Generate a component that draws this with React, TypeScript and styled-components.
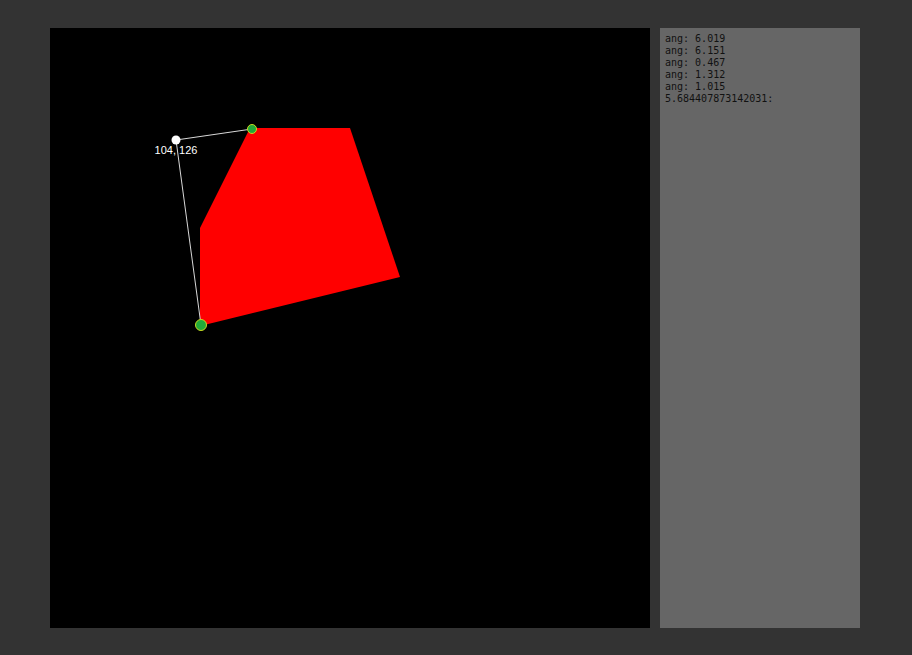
import React from 'react';
import styled, { createGlobalStyle } from 'styled-components';

const GlobalStyle = createGlobalStyle`
  html, body {
    margin: 0;
    padding: 0;
    background: #333333;
  }
`;

const Page = styled.div`
  display: flex;
  gap: 10px;
  padding: 28px 0 0 50px;
  height: 655px;
  box-sizing: border-box;
`;

const Stage = styled.svg`
  display: block;
  width: 600px;
  height: 600px;
  background: #000;
  flex: none;
`;

const SidePanel = styled.div`
  width: 200px;
  height: 600px;
  box-sizing: border-box;
  padding: 5px 5px;
  background: #666666;
  color: #111;
  font-family: 'DejaVu Sans Mono', 'Liberation Mono', monospace;
  font-size: 10px;
  line-height: 12px;
`;

const LogLine = styled.div`
  white-space: pre;
`;

const Handle = styled.circle`
  fill: #22aa3a;
  stroke: #c8d820;
  stroke-width: 1;
`;

const logs = ['ang: 6.019', 'ang: 6.151', 'ang: 0.467', 'ang: 1.312', 'ang: 1.015', '5.684407873142031:'];

const shape = [
  [150, 200],
  [200, 100],
  [300, 100],
  [350, 249],
  [150, 298],
];

const cursor = { x: 126, y: 112 };
const anchors = [
  { x: 202, y: 101, r: 4.5 },
  { x: 151, y: 297, r: 5.5 },
];

export default function App() {
  return (
    <>
      <GlobalStyle />
      <Page>
        <Stage viewBox="0 0 600 600">
          <polygon points={shape.map((p) => p.join(',')).join(' ')} fill="#ff0000" />
          {anchors.map((a) => (
            <line key={a.y} x1={cursor.x} y1={cursor.y} x2={a.x} y2={a.y} stroke="#d8d8d8" strokeWidth={1} />
          ))}
          <circle cx={cursor.x} cy={cursor.y} r={4.5} fill="#fff" />
          <text
            x={cursor.x}
            y={cursor.y + 14}
            fill="#fff"
            fontSize="11"
            textAnchor="middle"
            fontFamily="'Liberation Sans', Arial, sans-serif"
          >
            104, 126
          </text>
          {anchors.map((a) => (
            <Handle key={a.x} cx={a.x} cy={a.y} r={a.r} />
          ))}
        </Stage>
        <SidePanel>
          {logs.map((l, i) => (
            <LogLine key={i}>{l}</LogLine>
          ))}
        </SidePanel>
      </Page>
    </>
  );
}
